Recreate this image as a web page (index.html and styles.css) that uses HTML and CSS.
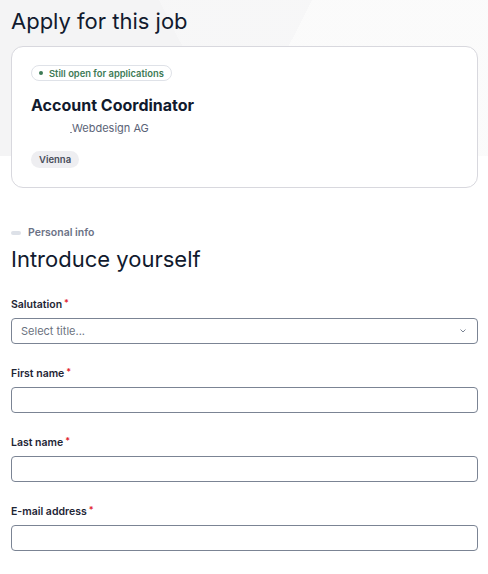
FILE: index.html
```html
<!DOCTYPE html>
<html lang="en">
<head>
<meta charset="utf-8">
<title>Apply for this job</title>
<link rel="stylesheet" href="styles.css">
</head>
<body>
<div class="page">
  <h1 class="title">Apply for this job</h1>
  <section class="card">
    <div class="status"><span class="dot"></span>Still open for applications</div>
    <h2 class="job">Account Coordinator</h2>
    <div class="company"><span class="logo"></span>Webdesign AG</div>
    <div class="tags"><span class="tag">Vienna</span></div>
  </section>

  <div class="section-label"><span class="bar"></span>Personal info</div>
  <h2 class="section-title">Introduce yourself</h2>

  <form class="form">
    <div class="field">
      <label class="label">Salutation<span class="req">*</span></label>
      <div class="select">
        <span class="placeholder">Select title...</span>
        <svg class="chev" width="6" height="4" viewBox="0 0 6 4"><path d="M0.8 0.8l2.2 2.2 2.2-2.2" fill="none" stroke="#7b8494" stroke-width="1" stroke-linecap="round" stroke-linejoin="round"/></svg>
      </div>
    </div>
    <div class="field">
      <label class="label">First name<span class="req">*</span></label>
      <div class="input"></div>
    </div>
    <div class="field">
      <label class="label">Last name<span class="req">*</span></label>
      <div class="input"></div>
    </div>
    <div class="field">
      <label class="label">E-mail address<span class="req">*</span></label>
      <div class="input"></div>
    </div>
  </form>
</div>
</body>
</html>
```

FILE: styles.css
```css
* { box-sizing: border-box; }
html, body { margin: 0; padding: 0; }
body {
  font-family: "Inter", "Noto Sans", sans-serif;
  color: #0f172a;
  background:
    linear-gradient(117deg, rgba(255,255,255,0) 0 55%, rgba(255,255,255,0.45) 55% 100%) 0 0 / 100% 156px no-repeat,
    linear-gradient(63deg, rgba(255,255,255,0) 0 42%, rgba(255,255,255,0.25) 42% 100%) 0 0 / 100% 156px no-repeat,
    linear-gradient(#f4f4f5, #f4f4f5) 0 0 / 100% 156px no-repeat,
    #ffffff;
}
.page { padding: 0 10px 0 11px; }
.title {
  margin: 0;
  padding-top: 6px;
  font-size: 22px;
  font-weight: 400;
  line-height: 30px;
  color: #111a2e;
}
.card {
  margin-top: 10px;
  background: #fff;
  border: 1px solid #d8d8de;
  border-radius: 12px;
  padding: 18px 19px 19px;
}
.status {
  display: flex;
  width: fit-content;
  align-items: center;
  gap: 6px;
  height: 16px;
  padding: 0 7px;
  border: 1px solid #dfe2e8;
  border-radius: 9px;
  font-size: 9.4px;
  font-weight: 600;
  color: #3d7a55;
}
.dot { width: 4px; height: 4px; border-radius: 50%; background: #3d7a55; }
.job {
  margin: 13px 0 0;
  font-size: 16px;
  font-weight: 700;
  line-height: 22px;
  color: #111a2e;
}
.company {
  display: flex;
  align-items: flex-end;
  margin-top: 5px;
  padding-left: 39px;
  font-size: 11px;
  line-height: 14px;
  color: #5b6377;
}
.logo { display: block; width: 2px; height: 1px; background: #8a90a0; margin-bottom: 2px; }
.tags { margin-top: 16px; display: flex; }
.tag {
  display: inline-block;
  height: 17px;
  line-height: 17px;
  padding: 0 8px;
  border-radius: 9px;
  background: #eeeef1;
  font-size: 9.5px;
  font-weight: 600;
  color: #474d5b;
}
.section-label {
  margin-top: 38px;
  display: flex;
  align-items: center;
  gap: 7px;
  font-size: 10.5px;
  font-weight: 600;
  color: #6b7286;
  line-height: 14px;
}
.bar { width: 10px; height: 4px; border-radius: 2px; background: #dde1e8; }
.section-title {
  margin: 4px 0 0;
  font-size: 22px;
  font-weight: 400;
  line-height: 30px;
  color: #111a2e;
}
.form { margin-top: 24px; display: flex; flex-direction: column; gap: 23px; }
.field { display: flex; flex-direction: column; gap: 6px; }
.label {
  font-size: 10.5px;
  font-weight: 600;
  color: #1e2535;
  line-height: 14px;
}
.req { color: #e11d2e; margin-left: 2px; position: relative; top: -2px; font-size: 9px; }
.select, .input {
  height: 26px;
  border: 1px solid #7b8494;
  border-radius: 4px;
  background: #fff;
}
.select {
  display: flex;
  align-items: center;
  justify-content: space-between;
  padding: 0 11px 0 9px;
}
.placeholder { font-size: 11px; color: #6b7280; }
.chev { display: block; }
```
